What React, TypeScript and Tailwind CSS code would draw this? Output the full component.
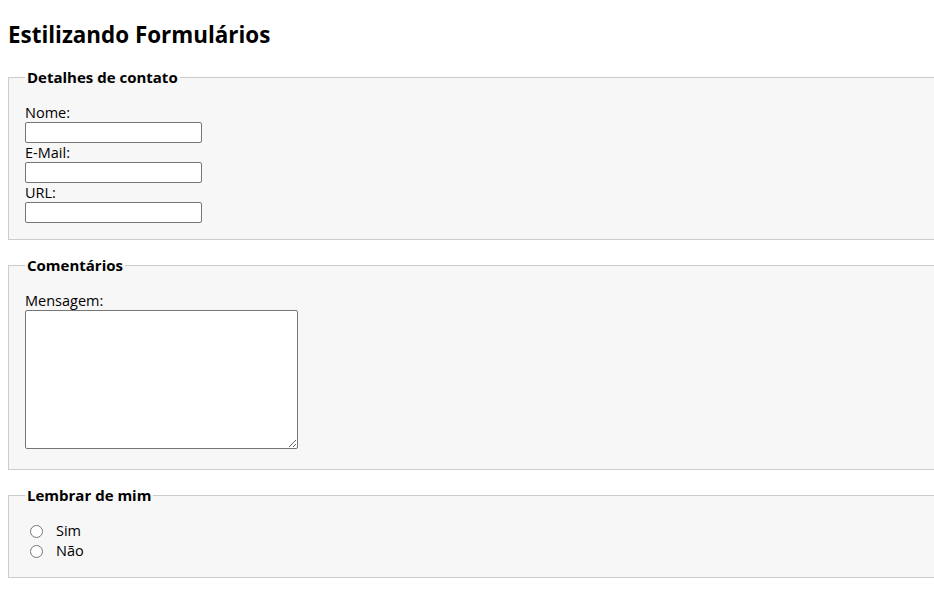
import React from "react";

const font = { fontFamily: '"Open Sans", "Liberation Sans", sans-serif' };

function Field({ label, type = "text" }: { label: string; type?: string }) {
  return (
    <>
      <label className="block text-[14.5px] leading-[19px] text-black">{label}</label>
      <input
        type={type}
        className="block h-[21px] w-[177px] rounded-[2px] border border-[#767676] bg-white px-1 text-[13px]"
      />
    </>
  );
}

function Box({ title, children, className = "" }: { title: string; children: React.ReactNode; className?: string }) {
  return (
    <fieldset
      className={
        "w-[calc(100%+40px)] border border-[#cccccc] bg-[#f7f7f7] px-4 pt-[18px] pb-4 " + className
      }
    >
      <legend className="px-[2px] text-[15px] font-bold leading-[16px] text-black">{title}</legend>
      {children}
    </fieldset>
  );
}

export default function App() {
  return (
    <div className="min-h-screen overflow-hidden bg-white px-2 pb-4 text-black" style={font}>
      <h1 className="mt-[21px] mb-[20px] text-[22.4px] font-bold leading-[28px]">Estilizando Formulários</h1>

      <form>
        <Box title="Detalhes de contato">
          <Field label="Nome:" />
          <Field label="E-Mail:" type="email" />
          <Field label="URL:" type="url" />
        </Box>

        <Box title="Comentários" className="mt-[17px] pb-5">
          <label className="block text-[14.5px] leading-[19px]">Mensagem:</label>
          <textarea className="block h-[139px] w-[273px] rounded-[2px] border border-[#767676] bg-white" />
        </Box>

        <Box title="Lembrar de mim" className="mt-[17px]">
          <label className="flex h-5 items-center text-[14.5px]">
            <input type="radio" name="lembrar" className="ml-[5px] mr-[13px] h-[13px] w-[13px]" />
            Sim
          </label>
          <label className="flex h-5 items-center text-[14.5px]">
            <input type="radio" name="lembrar" className="ml-[5px] mr-[13px] h-[13px] w-[13px]" />
            Não
          </label>
        </Box>
      </form>
    </div>
  );
}
